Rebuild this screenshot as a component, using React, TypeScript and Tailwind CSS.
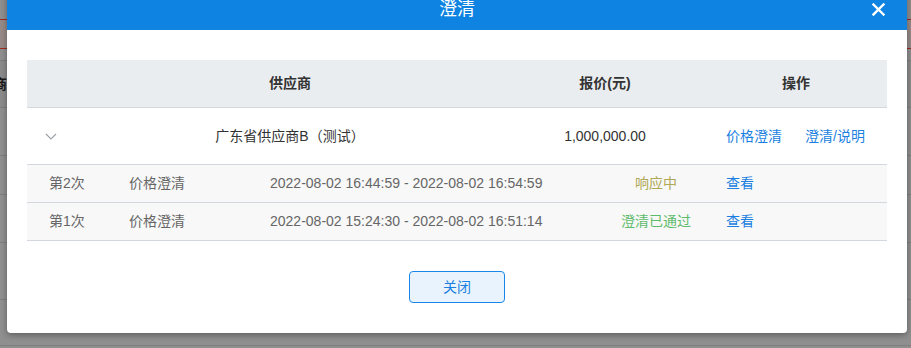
const font = { fontFamily: '"Liberation Sans", "Noto Sans CJK SC", sans-serif' };

function ChevronDown() {
  return (
    <svg width="12" height="7" viewBox="0 0 12 7" fill="none" stroke="#9aa0a8" strokeWidth="1.1">
      <path d="M1 1l5 5 5-5" />
    </svg>
  );
}

function CloseIcon() {
  return (
    <svg width="13" height="13" viewBox="0 0 13 13" fill="none" stroke="#fff" strokeWidth="2.4" strokeLinecap="square">
      <path d="M1.5 1.5l10 10M11.5 1.5l-10 10" />
    </svg>
  );
}

const rounds = [
  { no: "第2次", type: "价格澄清", time: "2022-08-02 16:44:59 - 2022-08-02 16:54:59", status: "响应中", color: "text-[#b0a855]" },
  { no: "第1次", type: "价格澄清", time: "2022-08-02 15:24:30 - 2022-08-02 16:51:14", status: "澄清已通过", color: "text-[#5fbb6c]" },
];

export default function App() {
  return (
    <div className="relative h-[348px] w-[911px] overflow-hidden bg-[#8f8f8f]" style={font}>
      {/* page behind the mask */}
      <div className="flex flex-col">
        <div className="h-[19px]" />
        <div className="h-[30px] border-y border-[#a12a20] bg-[#958a88]" />
        <div className="h-[11px]" />
        <div className="flex h-[48px] items-center border-y border-[#7e7e7e] bg-[#8b8b8b] text-[14px] font-bold text-[#1a1a1a]">
          <span className="-ml-[7px]">商时</span>
        </div>
        <div className="h-[48px] border-b border-[#7e7e7e]" />
        <div className="h-[39px] border-b border-[#7e7e7e]" />
        <div className="h-[48px] border-b border-[#7e7e7e]" />
        <div className="h-[57px] border-b border-[#7e7e7e]" />
        <div className="h-[46px] border-b border-[#7e7e7e]" />
      </div>

      {/* dialog */}
      <div className="absolute left-[7px] top-[-12px] w-[900px] rounded-b-[4px] bg-white shadow-[0_2px_6px_rgba(0,0,0,0.35)]">
        <div className="relative flex h-[42px] items-center justify-center bg-[#0e83e2]">
          <span className="text-[18px] text-white">澄清</span>
          <button className="absolute right-[22px] top-[15px]">
            <CloseIcon />
          </button>
        </div>

        <div className="px-[20px] pb-[30px] pt-[30px]">
          <div className="text-[14px]">
            <div className="flex h-[48px] items-center border-b border-[#d3d8de] bg-[#eaedf0] font-bold text-[#333]">
              <div className="w-[48px]" />
              <div className="w-[430px] text-center">供应商</div>
              <div className="w-[200px] text-center">报价(元)</div>
              <div className="flex-1 text-center">操作</div>
            </div>

            <div className="flex h-[57px] items-center border-b border-[#d3d8de] text-[#333]">
              <div className="flex w-[48px] justify-center">
                <ChevronDown />
              </div>
              <div className="w-[430px] text-center">广东省供应商B（测试）</div>
              <div className="w-[200px] text-center">1,000,000.00</div>
              <div className="flex flex-1 gap-[23px] pl-[21px] text-[#1a7fe0]">
                <span>价格澄清</span>
                <span>澄清/说明</span>
              </div>
            </div>

            {rounds.map((r) => (
              <div key={r.no} className="flex h-[38px] items-center border-b border-[#d3d8de] bg-[#f8f8f8] text-[#666]">
                <div className="w-[102px] pl-[22px]">{r.no}</div>
                <div className="w-[141px]">{r.type}</div>
                <div className="w-[336px]">{r.time}</div>
                <div className={`w-[100px] text-center ${r.color}`}>{r.status}</div>
                <div className="flex-1 pl-[20px] text-[#1a7fe0]">查看</div>
              </div>
            ))}
          </div>

          <div className="mt-[30px] flex justify-center">
            <button className="h-[32px] w-[96px] rounded-[4px] border border-[#1a86e8] bg-[#e8f3fd] text-[14px] text-[#1a7fe0]">
              关闭
            </button>
          </div>
        </div>
      </div>
    </div>
  );
}
